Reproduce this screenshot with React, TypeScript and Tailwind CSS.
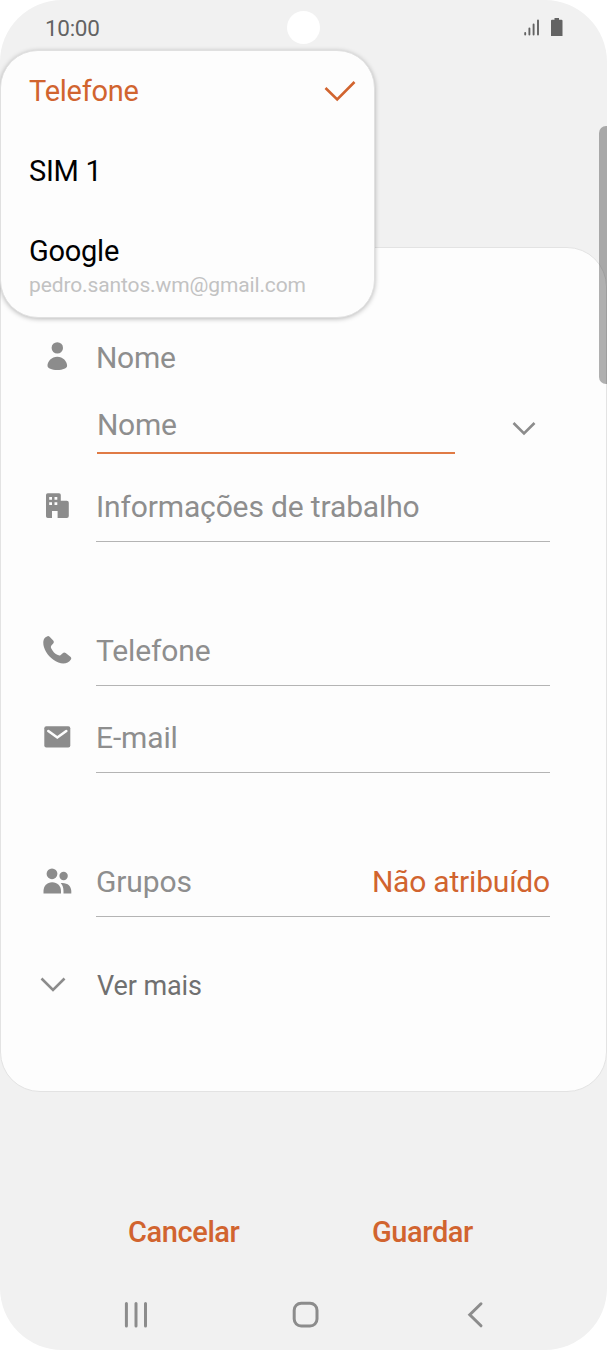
import React, { useState } from "react";

interface Account {
  name: string;
  email?: string;
}

interface FieldProps {
  label: string;
  icon: React.ReactNode;
  className?: string;
  value?: string;
}

const accounts: Account[] = [
  { name: "Telefone" },
  { name: "SIM 1" },
  { name: "Google", email: "pedro.santos.wm@gmail.com" },
];

const PersonIcon = () => (
  <svg width="30" height="30" viewBox="0 0 30 30" fill="currentColor">
    <circle cx="15.300" cy="5.900" r="5.700" />
    <path d="M15.300 14.800c5.600 0 9.800 4.600 9.800 8.900 0 2.600-4.200 4.200-9.800 4.200s-9.800-1.600-9.800-4.200c0-4.300 4.200-8.900 9.800-8.900z" />
  </svg>
);

const WorkIcon = () => (
  <svg width="30" height="30" viewBox="0 0 30 30" fill="currentColor" fillRule="evenodd">
    <path d="M5.800 1.300h11.200a1.800 1.800 0 0 1 1.800 1.800V8.700h6a2 2 0 0 1 2 2v13.300a2 2 0 0 1-2 2h-9.200V19H10v7H5.800a1.800 1.800 0 0 1-1.800-1.800V3.100a1.800 1.800 0 0 1 1.800-1.800z M7.200 5v2.800H10V5z M12.500 5v2.800h2.800V5z M7.200 10.300V13H10v-2.700z M12.500 10.300V13h2.800v-2.700z" />
  </svg>
);

const PhoneIcon = () => (
  <svg width="30" height="30" viewBox="0 0 30 30" fill="currentColor">
    <path d="M3.200 1.500 5 .4a2.200 2.200 0 0 1 2.600.4l3.600 3.700a2.200 2.200 0 0 1 0 2.900L9.400 9.600c-.7.900-.7 1.700-.1 2.800 1.500 3 3.500 5.100 6.600 6.700 1.200.6 2 .6 2.800-.2l2-1.700a2.200 2.200 0 0 1 3-.1l4.700 3.700c.9.700 1.100 1.800.5 2.700-2.400 3.900-7.500 5.300-12.500 3C9.200 23.400 4.200 17.900 2 11.300.8 7.500 1 3.500 3.200 1.500z" />
  </svg>
);

const MailIcon = () => (
  <svg width="30" height="30" viewBox="0 0 30 30">
    <rect x="2.300" y="3.200" width="26" height="21.200" rx="2" fill="currentColor" />
    <path d="M6.300 8 15.300 14.500 24.300 8" fill="none" stroke="#fdfdfd" strokeWidth="2.600" strokeLinecap="round" />
  </svg>
);

const GroupIcon = () => (
  <svg width="30" height="30" viewBox="0 0 30 30" fill="currentColor">
    <circle cx="10" cy="6.800" r="5.400" />
    <circle cx="21.600" cy="9" r="4.200" />
    <path d="M1.500 26.500V24c0-5.200 3.500-8.800 8.700-8.800s8.800 3.600 8.800 8.800v2.500z" />
    <path d="M18.700 16c6.500-.8 10.600 3 10.600 8v2.500h-7.800V24c0-3.300-.9-5.800-2.800-8z" />
  </svg>
);

const Field: React.FC<FieldProps> = ({ label, icon, className = "", value }) => (
  <div className={`flex h-[70px] ${className}`}>
    <div className="flex w-[54px] items-center text-[#8c8c8c]">{icon}</div>
    <div className="flex w-[454px] items-center justify-between border-b border-[#b4b4b4] pt-px tracking-[-0.14px] text-[#8e8e8e]">
      <span>{label}</span>
      {value && <span className="tracking-[-0.2px] text-[#d1642f]">{value}</span>}
    </div>
  </div>
);

const App: React.FC = () => {
  const [selected, setSelected] = useState("Telefone");

  return (
    <div className="h-[1350px] w-[607px] bg-white font-[Roboto,sans-serif]">
      <div className="relative flex h-full flex-col overflow-hidden rounded-[62px] bg-[#f1f1f1]">
        {/* Status bar */}
        <div className="flex h-[56px] items-center justify-between pl-[45px] pr-[43px] text-[#636363]">
          <span className="pt-px text-[22.500px] leading-none tracking-[-0.3px]">10:00</span>
          <div className="flex items-center">
            <svg width="17" height="20" viewBox="0 0 17 20" stroke="currentColor" strokeWidth="1.900" strokeLinecap="round">
              <path d="M2.200 15v1.500M6.400 10.500v6M10.600 6.500v10M15 2.500v14" />
            </svg>
            <svg className="ml-2.5" width="14" height="20" viewBox="0 0 14 20" fill="currentColor">
              <path d="M4.500 0h4.500v1.700h2.500a1 1 0 0 1 1 1V18H1V2.700a1 1 0 0 1 1-1h2.500z" />
            </svg>
          </div>
        </div>
        <div className="absolute left-[287px] top-[11px] size-[33px] rounded-full bg-white" />

        {/* Contact form */}
        <div className="mt-[191px] h-[845px] shrink-0 rounded-[40px] border border-[#e3e3e3] bg-[#fdfdfd] pl-[41px] pt-[89px] text-[30px] leading-none">
          <div className="flex h-[40px] items-center tracking-[-0.3px] text-[#8e8e8e]">
            <div className="w-[54px] text-[#8c8c8c]"><PersonIcon /></div>
            <span className="pt-0.5">Nome</span>
          </div>
          <div className="ml-[55px] mt-[19px] flex h-[58px]">
            <div className="flex w-[358px] items-center border-b-2 border-[#e07b45] pt-px tracking-[-0.3px] text-[#8e8e8e]">Nome</div>
            <svg className="ml-[57px] mt-[22px] text-[#8c8c8c]" width="24" height="20" viewBox="0 0 24 20" fill="none" stroke="currentColor" strokeWidth="2.600">
              <path d="M1.500 5 12 15.500 22.500 5" />
            </svg>
          </div>
          <Field label="Informações de trabalho" icon={<WorkIcon />} className="mt-[18px]" />
          <Field label="Telefone" icon={<PhoneIcon />} className="mt-[74px]" />
          <Field label="E-mail" icon={<MailIcon />} className="mt-[17px]" />
          <Field label="Grupos" icon={<GroupIcon />} className="mt-[74px]" value="Não atribuído" />
          <button className="mt-[48px] flex h-[40px] items-center text-[27px] tracking-[-0.1px] text-[#707070]">
            <svg className="mr-[31px] -ml-[2px]" width="26" height="20" viewBox="0 0 26 20" fill="none" stroke="#8c8c8c" strokeWidth="2.600">
              <path d="M1.500 3.500 13 15 24.500 3.500" />
            </svg>
            <span className="pt-0.5">Ver mais</span>
          </button>
        </div>

        {/* Actions */}
        <div className="mt-[120px] flex h-[40px] items-center text-[29px] font-medium leading-none tracking-[-0.4px] text-[#d1642f]">
          <button className="ml-[128px] w-[244px] text-left">Cancelar</button>
          <button>Guardar</button>
        </div>

        {/* Navigation bar */}
        <div className="mt-[46px] flex h-[34px] items-center text-[#8c8c8c]">
          <svg className="ml-[123px]" width="26" height="30" viewBox="0 0 26 30" stroke="currentColor" strokeWidth="3" strokeLinecap="round">
            <path d="M3.400 3.500v22.500M13 3.500v22.500M22.500 3.500v22.500" />
          </svg>
          <svg className="ml-[142px]" width="30" height="30" viewBox="0 0 30 30" fill="none" stroke="currentColor" strokeWidth="3">
            <rect x="3.200" y="3.200" width="22.800" height="22.800" rx="7" />
          </svg>
          <svg className="ml-[144px]" width="20" height="30" viewBox="0 0 20 30" fill="none" stroke="currentColor" strokeWidth="3" strokeLinecap="round">
            <path d="M16 3.800 4.800 14.800 16 25.800" />
          </svg>
        </div>

        {/* Account menu */}
        <div className="absolute left-0 top-[50px] flex h-[268px] w-[375px] flex-col rounded-[38px] border border-[#e0e0e0] bg-[#fdfdfd] shadow-[0_1px_5px_rgba(0,0,0,0.280)]">
          {accounts.map((account) => (
            <button
              key={account.name}
              onClick={() => setSelected(account.name)}
              className={`flex h-[80px] shrink-0 items-center justify-between pl-[28px] pr-[18px] pt-px text-left text-[29px] leading-none tracking-[-0.25px] ${
                selected === account.name ? "text-[#d1642f]" : "text-black"
              }`}
            >
              <span>
                {account.name}
                {account.email && <span className="-mb-[31px] mt-[7px] block text-[21px] leading-[24px] tracking-[-0.12px] text-[#c2c2c2]">{account.email}</span>}
              </span>
              {selected === account.name && (
                <svg className="-mt-0.5" width="32" height="24" viewBox="0 0 32 24" fill="none" stroke="currentColor" strokeWidth="2.600">
                  <path d="M1.500 9 13.200 20.500 30.500 3" />
                </svg>
              )}
            </button>
          ))}
        </div>

        <div className="absolute -right-[6px] top-[126px] h-[258px] w-[14px] rounded-[7px] bg-black/30" />
      </div>
    </div>
  );
};

export default App;
